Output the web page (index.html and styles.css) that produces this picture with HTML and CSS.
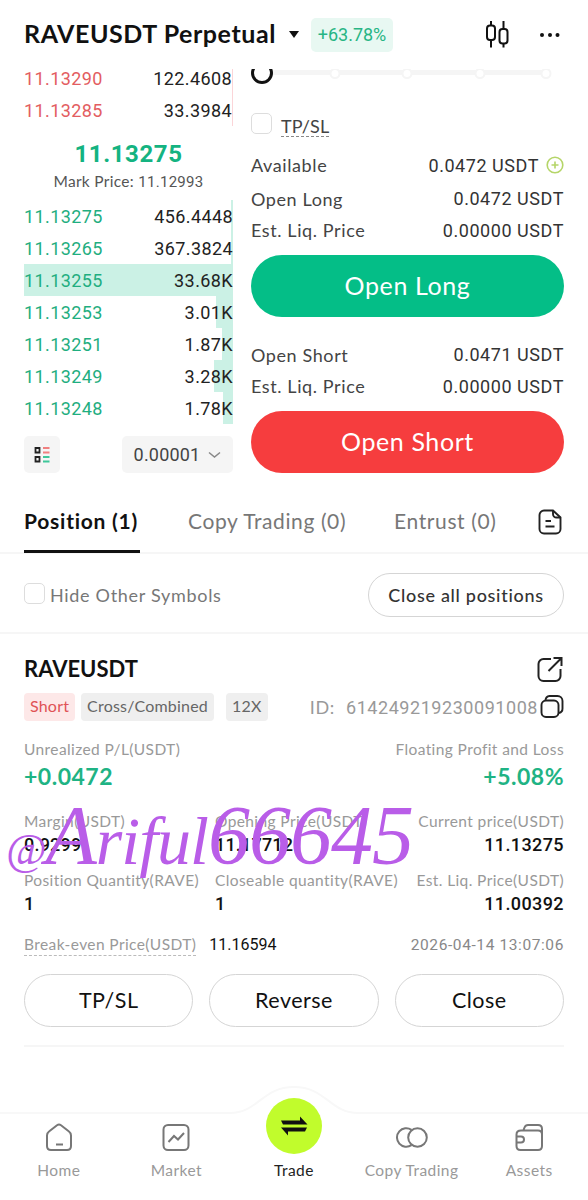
FILE: index.html
```html
<!DOCTYPE html>
<html lang="en">
<head>
    <meta charset="UTF-8">
    <meta name="viewport" content="width=device-width, initial-scale=1.0">
    <title>RAVEUSDT Perpetual</title>
    <link rel="stylesheet" href="styles.css">
</head>
<body>
    <header class="header">
        <h1>RAVEUSDT Perpetual</h1>
        <span class="caret"></span>
        <span class="change">+63.78%</span>
        <svg class="candles" width="26" height="30" viewBox="0 0 26 30" fill="none" stroke="#111" stroke-width="2">
            <rect x="2" y="5.500" width="8" height="14.500" rx="3"/>
            <path d="M6 1v4.500M6 20v7.500"/>
            <rect x="14.500" y="9" width="8" height="14.500" rx="3"/>
            <path d="M18.500 1v8M18.500 23.500v4"/>
        </svg>
        <svg width="22" height="6" viewBox="0 0 22 6" fill="#111">
            <circle cx="3" cy="3" r="2"/><circle cx="11" cy="3" r="2"/><circle cx="18.500" cy="3" r="2"/>
        </svg>
    </header>

    <main class="trade">
        <section class="book">
            <div class="row ask"><span>11.13290</span><b>122.4608</b></div>
            <div class="row ask"><span>11.13285</span><b>33.3984</b></div>
            <div class="last">11.13275</div>
            <div class="mark">Mark Price: <span>11.12993</span></div>
            <div class="row bid"><span>11.13275</span><b>456.4448</b><i style="width: 2px"></i></div>
            <div class="row bid"><span>11.13265</span><b>367.3824</b><i style="width: 2px"></i></div>
            <div class="row bid"><span>11.13255</span><b>33.68K</b><i style="width: 209px"></i></div>
            <div class="row bid"><span>11.13253</span><b>3.01K</b><i style="width: 17px"></i></div>
            <div class="row bid"><span>11.13251</span><b>1.87K</b><i style="width: 11px"></i></div>
            <div class="row bid"><span>11.13249</span><b>3.28K</b><i style="width: 19px"></i></div>
            <div class="row bid"><span>11.13248</span><b>1.78K</b><i style="width: 10px"></i></div>
            <div class="book-tools">
                <div class="tool">
                    <svg width="16" height="18" viewBox="0 0 16 18" fill="none" stroke-width="1.800">
                        <path d="M1.500 2h4v4.500h-4zM1.500 11h4v4.500h-4z" stroke="#222"/>
                        <path d="M9 2h6.500M9 6.500h6.500" stroke="#f08080"/>
                        <path d="M9 11h6.500M9 15.500h6.500" stroke="#3ec79a"/>
                    </svg>
                </div>
                <div class="tool step">0.00001
                    <svg width="13" height="8" viewBox="0 0 13 8" fill="none" stroke="#888" stroke-width="1.500"><path d="M1 1.500l5.500 4.500L12 1.500"/></svg>
                </div>
            </div>
        </section>

        <section class="order">
            <svg class="slider" width="313" height="17" viewBox="0 0 313 17">
                <path d="M12 3.500h286" stroke="#f5f5f5" stroke-width="5"/>
                <g fill="#fff" stroke="#f5f5f5" stroke-width="2">
                    <circle cx="84" cy="4.500" r="4.500"/><circle cx="156" cy="4.500" r="4.500"/>
                    <circle cx="229" cy="4.500" r="4.500"/><circle cx="295" cy="4.500" r="4.500"/>
                </g>
                <circle cx="11" cy="4" r="9.500" fill="#fff" stroke="#111" stroke-width="3"/>
            </svg>
            <label class="tpsl"><span class="box"></span><span class="dashed">TP/SL</span></label>
            <div class="info available"><span>Available</span><b>0.0472 USDT</b>
                <svg width="18" height="18" viewBox="0 0 18 18" fill="none" stroke="#b5d568" stroke-width="1.600"><circle cx="9" cy="9" r="7.800"/><path d="M5.500 9h7M9 5.500v7"/></svg>
            </div>
            <div class="info"><span>Open Long</span><b>0.0472 USDT</b></div>
            <div class="info"><span>Est. Liq. Price</span><b>0.00000 USDT</b></div>
            <button class="big long">Open Long</button>
            <div class="info"><span>Open Short</span><b>0.0471 USDT</b></div>
            <div class="info"><span>Est. Liq. Price</span><b>0.00000 USDT</b></div>
            <button class="big short">Open Short</button>
        </section>
    </main>

    <nav class="tabs">
        <a class="active">Position (1)</a>
        <a class="tab-copy">Copy Trading (0)</a>
        <a>Entrust (0)</a>
        <svg width="24" height="26" viewBox="0 0 24 26" fill="none" stroke="#222" stroke-width="1.900">
            <path d="M15 1.500H6a4.500 4.500 0 0 0-4.500 4.500v14A4.500 4.500 0 0 0 6 24.500h12a4.500 4.500 0 0 0 4.500-4.500V8.500z"/>
            <path d="M15 1.500v3.500a3.500 3.500 0 0 0 3.500 3.500h4M7.500 12H13M7.500 17.500h9"/>
        </svg>
    </nav>

    <div class="filter">
        <span class="box"></span>
        <span class="hide">Hide Other Symbols</span>
        <button class="pill">Close all positions</button>
    </div>

    <section class="position">
        <div class="title">
            <h2>RAVEUSDT</h2>
            <svg width="27" height="27" viewBox="0 0 27 27" fill="none" stroke="#222" stroke-width="2">
                <path d="M14 3H6.500a5 5 0 0 0-5 5v12a5 5 0 0 0 5 5h12a5 5 0 0 0 5-5v-7"/>
                <path d="M11.500 15L24.500 2M16.500 2h8v8"/>
            </svg>
        </div>
        <div class="tags">
            <span class="tag red">Short</span>
            <span class="tag">Cross/Combined</span>
            <span class="tag lever">12X</span>
            <span class="id">ID:&nbsp; <span>614249219230091008</span></span>
            <svg width="24" height="24" viewBox="0 0 24 24" fill="none" stroke="#222" stroke-width="1.900">
                <rect x="1.500" y="5.500" width="17" height="16.500" rx="4.500"/>
                <path d="M5.500 5A4.500 4.500 0 0 1 9.500 1h8a5 5 0 0 1 5 5v7.500a4.500 4.500 0 0 1-3.500 4.500"/>
            </svg>
        </div>

        <div class="pnl">
            <div><label>Unrealized P/L(USDT)</label><strong>+0.0472</strong></div>
            <div class="right"><label>Floating Profit and Loss</label><strong>+5.08%</strong></div>
        </div>

        <div class="stats">
            <div><label>Margin(USDT)</label><b>0.9299</b></div>
            <div><label>Opening Price(USDT)</label><b>11.17712</b></div>
            <div class="right"><label>Current price(USDT)</label><b>11.13275</b></div>
            <div><label>Position Quantity(RAVE)</label><b>1</b></div>
            <div><label>Closeable quantity(RAVE)</label><b>1</b></div>
            <div class="right"><label>Est. Liq. Price(USDT)</label><b>11.00392</b></div>
            <div class="watermark"><small>@</small><span>A</span><em>riful</em>66645</div>
        </div>

        <div class="breakeven">
            <label class="dashed">Break-even Price(USDT)</label>
            <b>11.16594</b>
            <time>2026-04-14 13:07:06</time>
        </div>

        <div class="actions">
            <button>TP/SL</button>
            <button>Reverse</button>
            <button>Close</button>
        </div>
    </section>

    <footer class="bottom">
        <svg class="edge" width="588" height="36" viewBox="0 0 588 36" fill="#fff" stroke="#f8f8f8" stroke-width="2">
            <path d="M-2 27H230C258 27 262 1 294 1s36 26 64 26h232v12H-2z"/>
        </svg>
        <a>
            <svg width="28" height="30" viewBox="0 0 28 30" fill="none" stroke="#777" stroke-width="2">
                <path d="M12 3.200L4 9.500Q2 11 2 13.500V24q0 4 4 4h16q4 0 4-4V13.500Q26 11 24 9.500L16 3.200Q14 1.800 12 3.200zM11 22.500h7"/>
            </svg>
            Home
        </a>
        <a>
            <svg width="28" height="30" viewBox="0 0 28 30" fill="none" stroke="#777" stroke-width="2">
                <rect x="1.500" y="3" width="25" height="25" rx="4.500"/>
                <path d="M6.500 20l5.500-6 4 3.500L22 11"/>
            </svg>
            Market
        </a>
        <a class="current">
            <span class="swap">
                <svg width="28" height="22" viewBox="0 0 28 22" fill="#111">
                    <path d="M1 5.500h19V1.500L27.500 9.500H3zM27 12.500l-2 4H8v4L1 12.500z"/>
                </svg>
            </span>
            Trade
        </a>
        <a>
            <svg width="32" height="30" viewBox="0 0 32 30" fill="none" stroke="#777" stroke-width="2">
                <path d="M15.500 23.200a9.300 9.300 0 1 1 0-15.400"/>
                <circle cx="21.500" cy="15.500" r="9.300"/>
            </svg>
            Copy Trading
        </a>
        <a>
            <svg width="30" height="30" viewBox="0 0 30 30" fill="none" stroke="#777" stroke-width="2">
                <path d="M7 8.500h17q4 0 4 4V24q0 4-4 4H6.500q-4 0-4-4V12.500q0-4 4.500-4zM9.500 8l1-2.500Q11.500 3 14 3h10q4 0 4 4v6M2.500 14.500H7a3 3 0 0 1 0 6H2.500"/>
            </svg>
            Assets
        </a>
    </footer>
</body>
</html>
```

FILE: styles.css
```css
* {
    box-sizing: border-box;
}
body {
    margin: 0;
    width: 588px;
    height: 1200px;
    overflow: hidden;
    background: #fff;
    color: #111;
    font-family: Lato, "Open Sans", sans-serif;
    display: flex;
    flex-direction: column;
}
h1, h2 {
    margin: 0;
}
b {
    font-weight: normal;
}
svg {
    flex-shrink: 0;
}
button {
    font-family: inherit;
    cursor: pointer;
}

/* Header */
.header {
    height: 69px;
    padding: 0 27px 0 24px;
    display: flex;
    align-items: center;
    flex-shrink: 0;
}
.header h1 {
    width: 265px;
    padding-bottom: 3px;
    font-size: 25px;
    letter-spacing: 0.55px;
    white-space: nowrap;
}
.caret {
    border: 5px solid transparent;
    border-top: 7px solid #111;
    border-bottom: 0;
}
.change {
    width: 82px;
    height: 34px;
    margin-left: 12px;
    line-height: 34px;
    text-align: center;
    border-radius: 5px;
    background: #e8f8f2;
    color: #27b584;
    font-family: Roboto, sans-serif;
    font-size: 18px;
}
.candles {
    margin: 0 28px 0 auto;
}

/* Order book and order form */
.trade {
    height: 422px;
    padding: 0 24px;
    display: flex;
    gap: 18px;
    overflow: hidden;
    flex-shrink: 0;
}
.book {
    width: 209px;
    margin-top: -7px;
}
.row {
    position: relative;
    height: 32px;
    display: flex;
    justify-content: space-between;
    align-items: center;
    font-family: Roboto, sans-serif;
    font-size: 18px;
    letter-spacing: 0.4px;
}
.row b {
    color: #222;
    z-index: 1;
}
.row span {
    z-index: 1;
}
.row i {
    position: absolute;
    right: 0;
    top: 0;
    height: 32px;
    background: #cbf1e5;
}
.ask {
    color: #e35d61;
    border-right: 1px solid #fbd5d8;
}
.bid {
    color: #1fae80;
}
.last {
    height: 49px;
    padding-top: 11px;
    text-align: center;
    color: #14b381;
    font: bold 24px/34px Roboto, sans-serif;
    letter-spacing: 0.6px;
}
.mark {
    height: 25px;
    line-height: 13px;
    text-align: center;
    color: #555;
    font-size: 15.5px;
    letter-spacing: 0.3px;
}
.mark span {
    font-family: Roboto, sans-serif;
    font-size: 15px;
}
.book-tools {
    display: flex;
    justify-content: space-between;
    margin-top: 12px;
}
.tool {
    width: 36px;
    height: 37px;
    display: flex;
    align-items: center;
    justify-content: center;
    gap: 8px;
    border-radius: 5px;
    background: #f5f5f5;
}
.step {
    width: 111px;
    color: #444;
    font-family: Roboto, sans-serif;
    font-size: 18px;
    letter-spacing: 0.2px;
}
.order {
    width: 313px;
}
.slider {
    display: block;
}
.tpsl {
    display: flex;
    gap: 9px;
    height: 22px;
    margin: 27px 0 12px;
    color: #444;
    font-size: 18px;
    letter-spacing: 0.1px;
}
.box {
    width: 21px;
    height: 21px;
    border: 1.5px solid #ddd;
    border-radius: 5px;
}
.dashed {
    border-bottom: 1.5px dashed #888;
}
.tpsl .dashed {
    height: 24px;
    line-height: 27px;
}
.info {
    display: flex;
    align-items: center;
    height: 31.5px;
    color: #444;
    font-size: 18px;
    letter-spacing: 0.6px;
}
.info b {
    margin-left: auto;
    color: #333;
    font-family: Roboto, sans-serif;
    letter-spacing: 0.55px;
}
.info svg {
    margin-left: 7px;
}
.available {
    height: 36px;
}
.big {
    display: block;
    width: 313px;
    height: 62px;
    padding-bottom: 4px;
    border: 0;
    border-radius: 31px;
    color: #fff;
    font-size: 25px;
    letter-spacing: 0.6px;
}
.long {
    margin: 9px 0 22px;
    background: #04be87;
}
.short {
    margin-top: 9px;
    background: #f63d3e;
}

/* Tabs */
.tabs {
    height: 63px;
    padding: 0 24px;
    display: flex;
    border-bottom: 2px solid #f6f6f6;
    color: #777;
    font-size: 21px;
    line-height: 59px;
    letter-spacing: 0.6px;
    flex-shrink: 0;
}
.tabs a {
    white-space: nowrap;
}
.tabs .active {
    width: 116px;
    height: 62px;
    border-bottom: 3px solid #111;
    color: #111;
    font-weight: bold;
    letter-spacing: 0.75px;
}
.tab-copy {
    margin: 0 48px;
}
.tabs svg {
    margin: 18px 2px 0 auto;
}
.filter {
    height: 80px;
    padding: 3px 24px 0;
    display: flex;
    align-items: center;
    border-bottom: 2px solid #f6f6f6;
    flex-shrink: 0;
}
.filter .box {
    margin-bottom: 3px;
}
.hide {
    margin-left: 5px;
    color: #777;
    font-size: 18px;
    letter-spacing: 0.7px;
}
.pill {
    width: 196px;
    height: 44px;
    margin-left: auto;
    padding: 0;
    border: 1.5px solid #d5d5d5;
    border-radius: 22px;
    background: #fff;
    color: #333;
    font-size: 18px;
    font-weight: 500;
    letter-spacing: 0.7px;
}

/* Position card */
.position {
    height: 413px;
    margin: 0 24px;
    border-bottom: 2px solid #f6f6f6;
    flex-shrink: 0;
}
.title {
    height: 59px;
    padding-top: 11px;
    display: flex;
    align-items: center;
    justify-content: space-between;
}
.title h2 {
    padding-bottom: 2px;
    font-size: 22px;
}
.tags {
    display: flex;
    align-items: center;
    height: 28px;
}
.tag {
    height: 28px;
    margin-right: 6px;
    padding: 0 6px;
    border-radius: 4px;
    background: #efefef;
    color: #666;
    font-size: 16px;
    line-height: 26px;
    letter-spacing: 0.2px;
}
.red {
    background: #fde8e8;
    color: #e05255;
}
.lever {
    margin-left: 6px;
}
.id {
    margin-left: auto;
    color: #999;
    font-size: 18px;
    letter-spacing: 0.55px;
    white-space: nowrap;
}
.id span {
    margin-left: 1px;
    font-family: Roboto, sans-serif;
}
.tags svg {
    margin-left: 2px;
}
label {
    display: block;
    color: #999;
    font-size: 15.5px;
    line-height: 20px;
    letter-spacing: 0.4px;
    white-space: nowrap;
}
.right {
    text-align: right;
}
.pnl {
    height: 91px;
    padding-top: 18px;
    display: flex;
    justify-content: space-between;
}
.pnl strong {
    display: block;
    color: #1fb384;
    font: bold 23px/34px Lato, sans-serif;
    letter-spacing: 0.5px;
}
.stats {
    position: relative;
    display: grid;
    grid-template-columns: 191px 184px 165px;
    grid-auto-rows: 58.5px;
}
.stats label {
    line-height: 18px;
}
.stats b {
    display: block;
    font: 500 18px/29px Roboto, sans-serif;
    letter-spacing: 0.2px;
}
.stats .right b {
    letter-spacing: 0.4px;
}
.watermark {
    position: absolute;
    left: -18px;
    top: -16px;
    color: #b95de8;
    font: italic 84px/80px "Liberation Serif", serif;
    letter-spacing: -1px;
    white-space: nowrap;
}
.watermark small {
    font-size: 44px;
}
.watermark em {
    font-size: 68px;
}
.breakeven {
    display: flex;
    height: 45px;
    padding-top: 5px;
    line-height: 22px;
}
.breakeven label {
    height: 22px;
    border-color: #bbb;
}
.breakeven b {
    margin-left: 13px;
    font-family: Roboto, sans-serif;
    font-size: 16px;
}
.breakeven time {
    margin-left: auto;
    color: #888;
    font-family: Roboto, sans-serif;
    font-size: 15.5px;
    letter-spacing: 0.6px;
}
.actions {
    display: flex;
    gap: 16px;
}
.actions button {
    flex: 1;
    height: 53px;
    padding-bottom: 3px;
    border: 1.5px solid #d5d5d5;
    border-radius: 27px;
    background: #fff;
    color: #111;
    font-size: 21.5px;
    letter-spacing: 0.5px;
}

/* Bottom bar */
.bottom {
    position: relative;
    height: 87px;
    margin-top: auto;
    display: flex;
    flex-shrink: 0;
}
.bottom a {
    position: relative;
    flex: 1;
    display: flex;
    flex-direction: column;
    align-items: center;
    padding-top: 9px;
    color: #999;
    font-size: 15.5px;
    line-height: 18px;
    letter-spacing: 0.45px;
    white-space: nowrap;
}
.bottom a svg {
    margin-bottom: 9px;
}
.edge {
    position: absolute;
    left: 0;
    top: -27px;
}
.bottom .current {
    padding-top: 0;
    color: #222;
}
.swap {
    width: 56px;
    height: 56px;
    margin: -15px 0 7px;
    display: flex;
    align-items: center;
    justify-content: center;
    border-radius: 50%;
    background: #c1fc2c;
}
.bottom .swap svg {
    margin: 0;
}
```
